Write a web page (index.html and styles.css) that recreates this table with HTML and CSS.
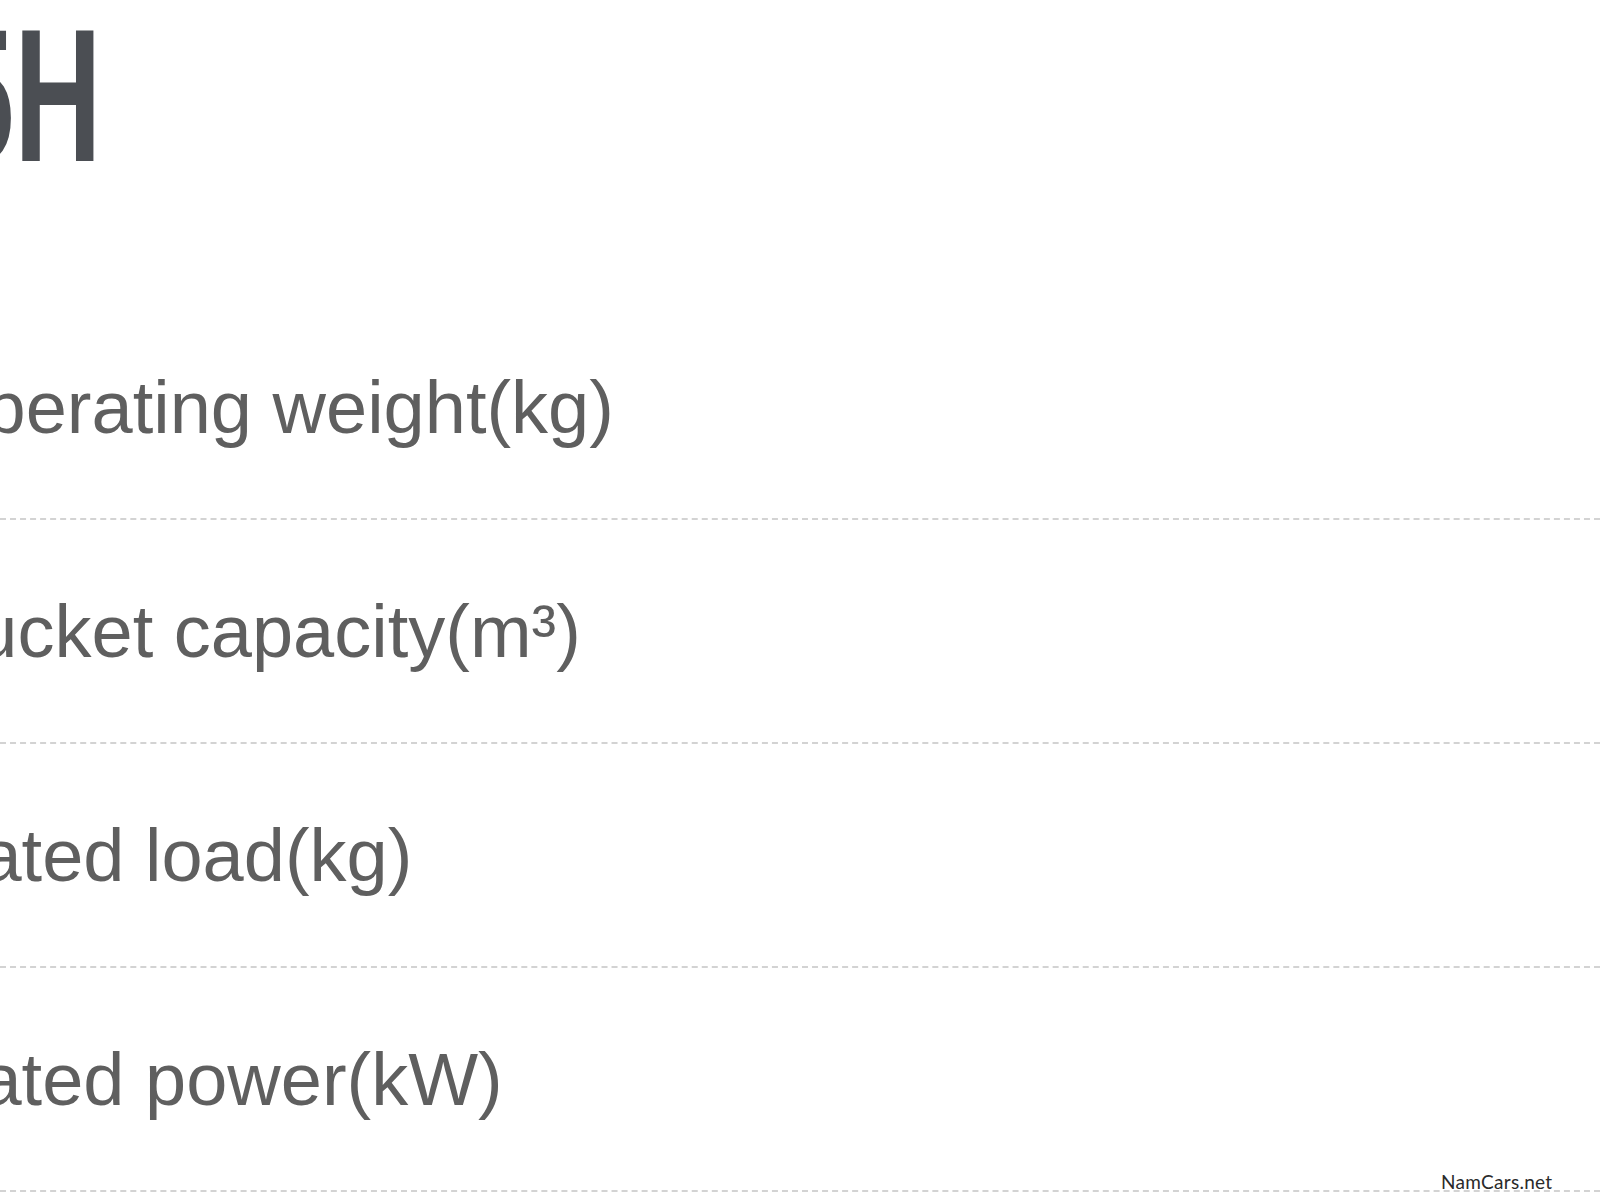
FILE: index.html
```html
<!DOCTYPE html>
<html lang="en">
<head>
<meta charset="utf-8">
<title>Specifications</title>
<link rel="stylesheet" href="styles.css">
</head>
<body>
<main class="sheet">
  <h1 class="title"><span class="title-text">5H</span></h1>
  <ul class="specs">
    <li class="row"><span class="label">Operating weight(kg)</span></li>
    <li class="row"><span class="label">Bucket capacity(m³)</span></li>
    <li class="row"><span class="label">Rated load(kg)</span></li>
    <li class="row"><span class="label">Rated power(kW)</span></li>
  </ul>
  <div class="watermark">NamCars.net</div>
</main>
</body>
</html>
```

FILE: styles.css
```css
html, body {
  margin: 0;
  padding: 0;
  background: #ffffff;
  overflow: hidden;
}

.sheet {
  position: relative;
  width: 1600px;
  height: 1200px;
  overflow: hidden;
}

.title {
  margin: 0 0 105px -53px;
  height: 191px;
  font-family: "Liberation Sans", Arial, sans-serif;
  font-weight: 700;
  font-size: 189px;
  line-height: 191px;
  color: #4b4e53;
  white-space: nowrap;
}

.title-text {
  display: inline-block;
  transform: scaleX(0.64);
  transform-origin: left center;
}

.specs {
  list-style: none;
  margin: 0;
  padding: 0;
}

.row {
  padding: 75px 0 73px;
  border-bottom: 2px dashed #d3d3d3;
  font-family: "Liberation Sans", Arial, sans-serif;
  font-size: 74px;
  line-height: 74px;
  color: #5f5f5f;
  white-space: nowrap;
}

.label {
  display: block;
  margin-left: -73px;
}

.watermark {
  position: absolute;
  left: 1441px;
  top: 1171px;
  font-family: "Lato", "Noto Sans", sans-serif;
  font-weight: 400;
  font-size: 19px;
  line-height: 22px;
  color: #2a2a2a;
  letter-spacing: 0.3px;
}
```
